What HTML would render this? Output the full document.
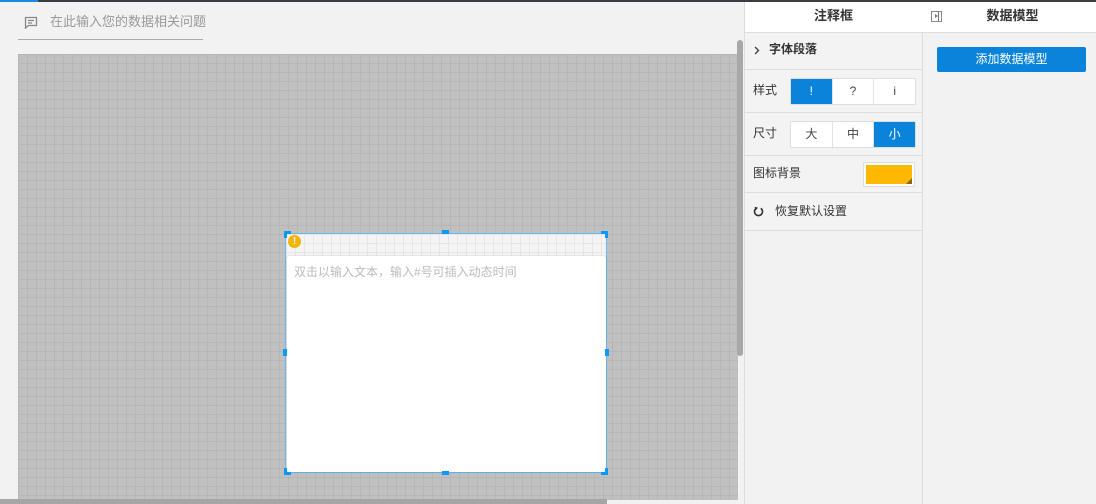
<!DOCTYPE html>
<html><head><meta charset="utf-8"><style>
*{box-sizing:border-box;margin:0;padding:0}
body{width:1096px;height:504px;overflow:hidden;background:#f2f2f2;font-family:"Liberation Sans","Noto Sans CJK SC",sans-serif;position:relative;font-size:12px;color:#333;line-height:1.2}
.abs{position:absolute}
.grid{background-color:#c0c0c0;background-image:linear-gradient(#b6b6b6 1px,transparent 1px),linear-gradient(90deg,#b6b6b6 1px,transparent 1px);background-size:9px 9px}
.row{position:absolute;left:745px;width:177px;border-bottom:1px solid #ddd;background:#f3f3f3}
.seg{position:absolute;left:790px;width:126px;height:27px;display:flex;border:1px solid #ddd;border-radius:2px;background:#fff}
.seg div{flex:1;display:flex;align-items:center;justify-content:center;border-left:1px solid #e2e2e2;font-size:12px;color:#444}
.seg div:first-child{border-left:none}
.seg .on{background:#0a84db;color:#fff}
.h{position:absolute;background:#0a9af5}
</style></head><body>
<div class="abs" style="left:0;top:0;width:1096px;height:2px;background:#3a3d42"></div>
<div class="abs" style="left:0;top:0;width:38px;height:2px;background:#1e88e5"></div>
<svg class="abs" style="left:24px;top:16px" width="14" height="13" viewBox="0 0 14 13"><path d="M1.5 1.5h11v8h-8l-3 2.5z" fill="none" stroke="#888" stroke-width="1.3"/><path d="M4 4.5h6M4 7h4" stroke="#888" stroke-width="1.2"/></svg>
<div class="abs" style="left:50px;top:14px;font-size:13px;color:#999">在此输入您的数据相关问题</div>
<div class="abs" style="left:18px;top:39px;width:185px;height:1px;background:#aaa"></div>
<div class="abs grid" style="left:18px;top:54px;width:720px;height:446px"></div>
<div class="abs" style="left:0;top:499px;width:607px;height:5px;background:#a6a6a6"></div>
<div class="abs" style="left:737px;top:40px;width:6px;height:316px;background:#a8a8a8;border-radius:3px"></div>
<div class="abs" style="left:285px;top:233px;width:322px;height:240px;border:1px solid #6ab7f2;background:#f4f4f4;background-image:linear-gradient(#e6e6e6 1px,transparent 1px),linear-gradient(90deg,#e6e6e6 1px,transparent 1px);background-size:9px 9px"></div>
<div class="abs" style="left:287px;top:256px;width:319px;height:216px;background:#fff;border-radius:3px;box-shadow:0 0 2px rgba(0,0,0,.15)"></div>
<div class="abs" style="left:294px;top:265px;font-size:12px;color:#bbb">双击以输入文本，输入#号可插入动态时间</div>
<div class="abs" style="left:288px;top:235px;width:13px;height:13px;border-radius:50%;background:#f5b400;color:#fff;font-size:10px;font-weight:bold;text-align:center;line-height:13px">!</div>
<div class="h" style="left:284px;top:231px;width:7px;height:3px"></div><div class="h" style="left:284px;top:231px;width:3px;height:7px"></div>
<div class="h" style="left:601px;top:231px;width:7px;height:3px"></div><div class="h" style="left:605px;top:231px;width:3px;height:7px"></div>
<div class="h" style="left:284px;top:472px;width:7px;height:3px"></div><div class="h" style="left:284px;top:468px;width:3px;height:7px"></div>
<div class="h" style="left:601px;top:472px;width:7px;height:3px"></div><div class="h" style="left:605px;top:468px;width:3px;height:7px"></div>
<div class="h" style="left:442px;top:230px;width:7px;height:4px"></div>
<div class="h" style="left:442px;top:471px;width:7px;height:4px"></div>
<div class="h" style="left:283px;top:349px;width:4px;height:7px"></div>
<div class="h" style="left:605px;top:349px;width:4px;height:7px"></div>
<div class="abs" style="left:744px;top:2px;width:1px;height:502px;background:#ddd"></div>
<div class="abs" style="left:922px;top:2px;width:1px;height:502px;background:#ddd"></div>
<div class="abs" style="left:745px;top:2px;width:351px;height:31px;background:#fff;border-bottom:1px solid #ddd"></div>
<div class="abs" style="left:745px;top:8px;width:177px;text-align:center;font-size:13px;font-weight:bold;color:#333">注释框</div>
<div class="abs" style="left:923px;top:8px;width:173px;text-align:center;font-size:13px;font-weight:bold;color:#333;padding-left:6px">数据模型</div>
<div class="abs" style="left:931px;top:11px;width:11px;height:11px;border:1px solid #888"></div>
<div class="abs" style="left:935px;top:14px;width:0;height:0;border-left:3px solid #777;border-top:2.5px solid transparent;border-bottom:2.5px solid transparent"></div>
<div class="abs" style="left:938px;top:12px;width:1px;height:9px;background:#777"></div>
<div class="row" style="top:33px;height:37px"></div>
<svg class="abs" style="left:754px;top:46px" width="6" height="9" viewBox="0 0 6 9"><path d="M1 1l3.5 3.5L1 8" fill="none" stroke="#444" stroke-width="1.4"/></svg>
<div class="abs" style="left:769px;top:42px;font-size:12px;font-weight:bold;color:#333">字体段落</div>
<div class="row" style="top:70px;height:43px"></div>
<div class="abs" style="left:753px;top:83px">样式</div>
<div class="seg" style="top:78px"><div class="on">!</div><div>?</div><div>i</div></div>
<div class="row" style="top:113px;height:43px"></div>
<div class="abs" style="left:753px;top:126px">尺寸</div>
<div class="seg" style="top:121px"><div>大</div><div>中</div><div class="on">小</div></div>
<div class="row" style="top:156px;height:37px"></div>
<div class="abs" style="left:753px;top:166px">图标背景</div>
<div class="abs" style="left:863px;top:162px;width:52px;height:25px;border:1px solid #ddd;background:#fff;padding:2px"><div style="width:100%;height:100%;background:#fdb902;position:relative"><div style="position:absolute;right:0;bottom:0;border-right:6px solid #8a6a10;border-top:6px solid transparent"></div></div></div>
<div class="row" style="top:193px;height:38px"></div>
<svg class="abs" style="left:753px;top:206px" width="11" height="11" viewBox="0 0 11 11"><path d="M7.8 2.3A4 4 0 1 1 3.2 2.3" fill="none" stroke="#333" stroke-width="1.6"/><path d="M1.5 0.8L5 1.6 2.8 4.4z" fill="#333"/></svg>
<div class="abs" style="left:775px;top:204px">恢复默认设置</div>
<div class="abs" style="left:937px;top:47px;width:149px;height:25px;background:#0a84db;border-radius:2px;color:#fff;text-align:center;line-height:24px;font-size:12px">添加数据模型</div>
</body></html>
